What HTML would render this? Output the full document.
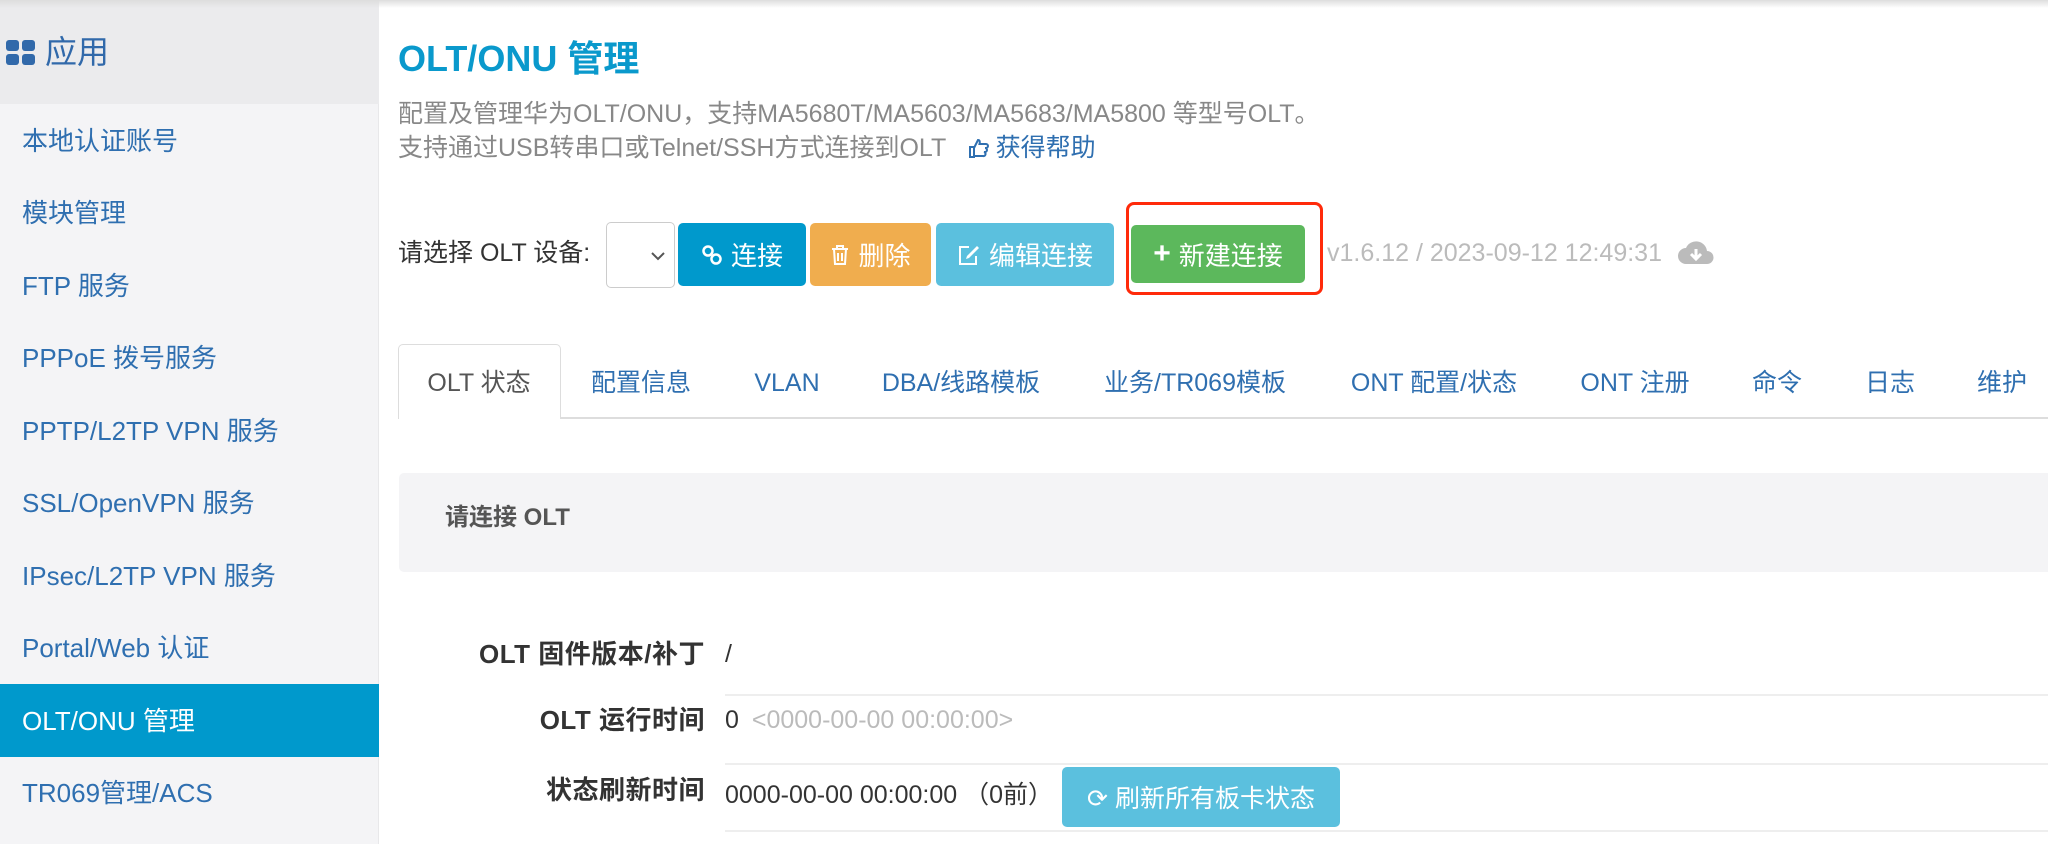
<!DOCTYPE html>
<html><head><meta charset="utf-8"><style>
*{margin:0;padding:0;box-sizing:border-box}
body{width:2048px;height:844px;overflow:hidden;background:#fff;font-family:"Liberation Sans","Noto Sans CJK SC",sans-serif;position:relative}
.abs{position:absolute;white-space:nowrap}
#side{position:absolute;left:0;top:0;width:379px;height:844px;background:#f4f4f6;border-right:1px solid #e8e8ea}
#head{position:absolute;left:0;top:0;width:379px;height:104px;background:#ebebed}
.mi{position:absolute;left:22px;font-size:26px;color:#2f6fb0;line-height:34px;white-space:nowrap}
.act{position:absolute;left:0;top:684px;width:379px;height:73px;background:#0099cc}
.btn{position:absolute;top:223px;height:63px;border-radius:5px;color:#fff;font-size:26px;display:flex;align-items:center;justify-content:center;gap:8px;white-space:nowrap}
.tab{position:absolute;top:368px;font-size:25px;line-height:30px;color:#2f6fb0;transform:translateX(-50%);white-space:nowrap}
.lbl{position:absolute;right:1343px;font-size:26px;line-height:30px;font-weight:bold;color:#333;white-space:nowrap;letter-spacing:0.5px}
.line{position:absolute;left:725px;right:0;height:2px;background:#eee}
</style></head><body>
<div style="position:absolute;left:0;top:0;width:2048px;height:8px;background:linear-gradient(#ddd,#fff0);z-index:3"></div>
<div id="side"></div>
<div id="head"></div>
<svg class="abs" style="left:6px;top:40px" width="30" height="26"><rect x="0" y="0" width="13" height="11" rx="3" fill="#3169aa"/><rect x="16" y="0" width="13" height="11" rx="3" fill="#3169aa"/><rect x="0" y="14" width="13" height="11" rx="3" fill="#3169aa"/><rect x="16" y="14" width="13" height="11" rx="3" fill="#3169aa"/></svg>
<div class="abs" style="left:45px;top:32px;font-size:32px;line-height:40px;color:#3169aa">应用</div>
<div class="mi" style="top:124px">本地认证账号</div>
<div class="mi" style="top:196px">模块管理</div>
<div class="mi" style="top:269px">FTP 服务</div>
<div class="mi" style="top:341px">PPPoE 拨号服务</div>
<div class="mi" style="top:414px">PPTP/L2TP VPN 服务</div>
<div class="mi" style="top:486px">SSL/OpenVPN 服务</div>
<div class="mi" style="top:559px">IPsec/L2TP VPN 服务</div>
<div class="mi" style="top:631px">Portal/Web 认证</div>
<div class="act"></div>
<div class="mi" style="top:704px;color:#fff">OLT/ONU 管理</div>
<div class="mi" style="top:776px">TR069管理/ACS</div>

<div class="abs" style="left:398px;top:39px;font-size:36px;line-height:40px;color:#0a99cc;font-weight:bold">OLT/ONU 管理</div>
<div class="abs" style="left:398px;top:100px;font-size:25px;line-height:28px;color:#888">配置及管理华为OLT/ONU，支持MA5680T/MA5603/MA5683/MA5800 等型号OLT。</div>
<div class="abs" style="left:398px;top:134px;font-size:25px;line-height:28px;color:#888">支持通过USB转串口或Telnet/SSH方式连接到OLT <span style="color:#2f6fb0;margin-left:14px"><svg width="22" height="22" viewBox="0 0 22 22" style="vertical-align:-3px"><path d="M3 10h4v10H3zM7 11l4-8c2 0 2 2 1.5 4H19a2 2 0 0 1 0 4h-1a2 2 0 0 1 0 4h-1a2 2 0 0 1-1 4H7" fill="none" stroke="#2f6fb0" stroke-width="2"/></svg> 获得帮助</span></div>

<div class="abs" style="left:398px;top:238px;font-size:25px;line-height:30px;color:#333">请选择 OLT 设备:</div>
<div class="abs" style="left:606px;top:222px;width:69px;height:66px;border:1px solid #ccc;border-radius:5px;background:#fff"><svg style="position:absolute;left:44px;top:29px" width="14" height="9"><path d="M1 1l6 6 6-6" stroke="#555" stroke-width="2" fill="none"/></svg></div>
<div class="btn" style="left:678px;width:128px;background:#0099cc"><svg width="22" height="22" viewBox="0 0 22 22"><circle cx="7" cy="7" r="4.5" fill="none" stroke="#fff" stroke-width="2.5"/><circle cx="15" cy="15" r="4.5" fill="none" stroke="#fff" stroke-width="2.5"/></svg>连接</div>
<div class="btn" style="left:810px;width:121px;background:#f0ad4e"><svg width="20" height="22" viewBox="0 0 20 22"><path d="M2 5h16M7 5V2h6v3M4 5l1 15h10l1-15M8 9v8M12 9v8" fill="none" stroke="#fff" stroke-width="2"/></svg>删除</div>
<div class="btn" style="left:936px;width:178px;background:#5bc0de"><svg width="24" height="22" viewBox="0 0 24 22"><path d="M12 3H3v17h16v-8" fill="none" stroke="#fff" stroke-width="2"/><path d="M20 2l2 2-10 10-3 1 1-3z" fill="#fff"/></svg>编辑连接</div>
<div class="abs" style="left:1126px;top:202px;width:197px;height:93px;border:3px solid #ff2a0a;border-radius:8px"></div>
<div class="btn" style="left:1131px;width:174px;top:225px;height:58px;background:#5cb85c"><b style="font-size:30px">+</b>新建连接</div>
<div class="abs" style="left:1327px;top:238px;font-size:25px;line-height:30px;color:#bbb">v1.6.12 / 2023-09-12 12:49:31</div>
<svg class="abs" style="left:1678px;top:238px" width="36" height="28"><path d="M8 26a8 8 0 0 1 0-16 11 11 0 0 1 21 3 6.5 6.5 0 0 1 0 13z" fill="#bbb"/><path d="M18 11v9M13 16l5 5 5-5" stroke="#fff" stroke-width="3" fill="none"/></svg>

<div class="abs" style="left:398px;top:417px;width:1650px;height:2px;background:#ddd"></div>
<div class="abs" style="left:398px;top:344px;width:163px;height:75px;border:1px solid #ddd;border-bottom:none;border-radius:5px 5px 0 0;background:#fff"></div>
<div class="tab" style="left:479px;color:#555">OLT 状态</div>
<div class="tab" style="left:641px">配置信息</div>
<div class="tab" style="left:787px">VLAN</div>
<div class="tab" style="left:961px">DBA/线路模板</div>
<div class="tab" style="left:1195px">业务/TR069模板</div>
<div class="tab" style="left:1434px">ONT 配置/状态</div>
<div class="tab" style="left:1635px">ONT 注册</div>
<div class="tab" style="left:1777px">命令</div>
<div class="tab" style="left:1890px">日志</div>
<div class="tab" style="left:2002px">维护</div>

<div class="abs" style="left:399px;top:473px;width:1649px;height:99px;background:#f4f4f6;border-radius:5px 0 0 5px"></div>
<div class="abs" style="left:445px;top:503px;font-size:24px;line-height:30px;font-weight:bold;color:#555">请连接 OLT</div>

<div class="lbl" style="top:639px">OLT 固件版本/补丁</div>
<div class="abs" style="left:725px;top:639px;font-size:25px;line-height:30px;color:#333">/</div>
<div class="line" style="top:694px"></div>
<div class="lbl" style="top:705px">OLT 运行时间</div>
<div class="abs" style="left:725px;top:705px;font-size:25px;line-height:30px;color:#333">0 <span style="color:#bbb;margin-left:6px">&lt;0000-00-00 00:00:00&gt;</span></div>
<div class="line" style="top:763px"></div>
<div class="lbl" style="top:775px">状态刷新时间</div>
<div class="abs" style="left:725px;top:780px;font-size:25px;line-height:30px;color:#333">0000-00-00 00:00:00 （0前）</div>
<div class="btn" style="left:1062px;top:767px;width:278px;height:60px;background:#5bc0de;font-size:25px">⟳ 刷新所有板卡状态</div>
<div class="line" style="top:830px"></div>
</body></html>
